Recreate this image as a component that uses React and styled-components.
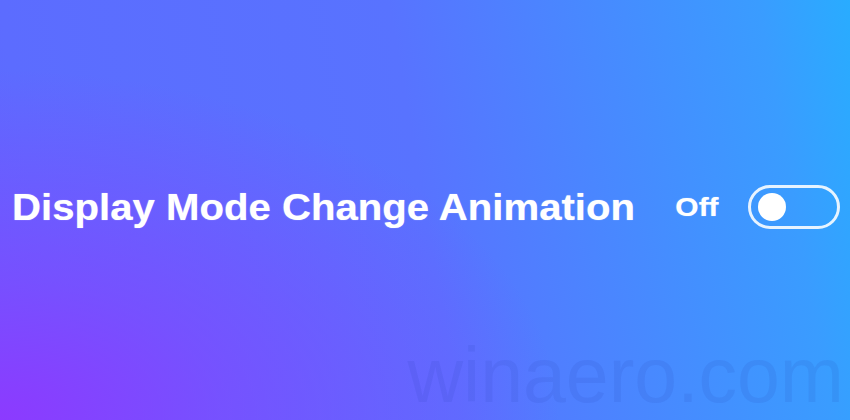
import React from "react";
import styled, { createGlobalStyle } from "styled-components";

const Global = createGlobalStyle`
  html, body, #root { margin: 0; padding: 0; width: 100%; height: 100%; }
  body { font-family: "Liberation Sans", Arial, sans-serif; overflow: hidden; }
`;

/* violet glow in the lower-left corner over a blue-to-cyan sweep */
const Page = styled.main`
  position: relative;
  width: 850px;
  height: 420px;
  display: flex;
  align-items: center;
  padding: 0 10px 6px 12px;
  box-sizing: border-box;
  background:
    radial-gradient(
      ellipse 560px 350px at 0% 100%,
      rgba(140, 58, 255, 1) 0%,
      rgba(140, 58, 255, 0.55) 40%,
      rgba(140, 58, 255, 0) 100%
    ),
    linear-gradient(
      80deg,
      #5e69ff 0%,
      #5c6cff 8%,
      #5873ff 50%,
      #3a9cff 90%,
      #29acff 100%
    );
  overflow: hidden;
`;

const SettingRow = styled.div`
  display: flex;
  align-items: center;
  width: 100%;
`;

const LabelBox = styled.div`
  flex: 1;
  min-width: 0;
`;

const Label = styled.span`
  display: inline-block;
  color: #fff;
  font-weight: 700;
  font-size: 37px;
  line-height: 1;
  white-space: nowrap;
  transform: scaleX(1.085);
  transform-origin: left center;
  text-shadow: 0 0 1px rgba(255, 255, 255, 0.6);
`;

const State = styled.span`
  display: inline-block;
  color: #fff;
  font-weight: 700;
  font-size: 26px;
  line-height: 1;
  margin-right: 29px;
  transform: scaleX(1.15);
  transform-origin: right center;
  text-shadow: 0 0 1px rgba(255, 255, 255, 0.6);
`;

const Switch = styled.button`
  width: 92px;
  height: 44px;
  box-sizing: border-box;
  border: 3px solid rgba(255, 255, 255, 0.88);
  border-radius: 22px;
  background: transparent;
  padding: 0 0 0 7px;
  display: flex;
  align-items: center;
  justify-content: ${(p) => (p.$on ? "flex-end" : "flex-start")};
  cursor: pointer;
`;

const Knob = styled.span`
  width: 28px;
  height: 28px;
  border-radius: 50%;
  background: #fff;
`;

const Watermark = styled.div`
  position: absolute;
  right: 6px;
  bottom: 6px;
  font-family: "Liberation Sans", Arial, sans-serif;
  font-size: 77px;
  line-height: 1;
  color: rgba(40, 60, 170, 0.11);
  pointer-events: none;
`;

export default function App() {
  const on = false;
  return (
    <>
      <Global />
      <Page>
        <SettingRow>
          <LabelBox>
            <Label>Display Mode Change Animation</Label>
          </LabelBox>
          <State>{on ? "On" : "Off"}</State>
          <Switch $on={on} aria-pressed={on}>
            <Knob />
          </Switch>
        </SettingRow>
        <Watermark>winaero.com</Watermark>
      </Page>
    </>
  );
}
